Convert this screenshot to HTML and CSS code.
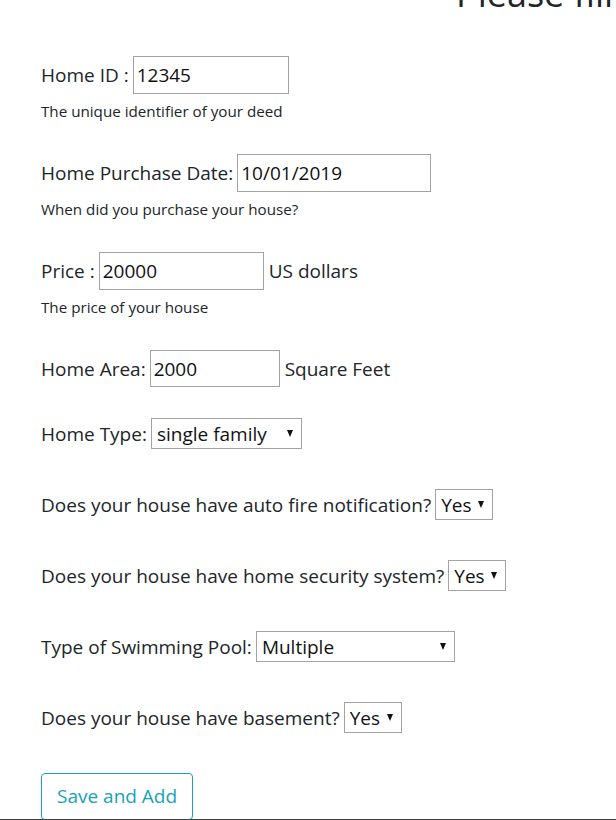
FILE: index.html
```html
<!DOCTYPE html>
<html lang="en">
<head>
<meta charset="utf-8">
<title>Home form</title>
<link rel="stylesheet" href="styles.css">
</head>
<body>
<div class="page">
  <h1 class="title">Please fill out the form</h1>
  <form class="form">
    <div class="group">
      <div class="row">
        <label class="label" for="hid">Home ID :</label>
        <input class="input w-id" id="hid" type="text" value="12345">
      </div>
      <div class="help">The unique identifier of your deed</div>
    </div>
    <div class="group">
      <div class="row">
        <label class="label" for="hdate">Home Purchase Date:</label>
        <input class="input w-date" id="hdate" type="text" value="10/01/2019">
      </div>
      <div class="help">When did you purchase your house?</div>
    </div>
    <div class="group">
      <div class="row">
        <label class="label" for="price">Price :</label>
        <input class="input w-price" id="price" type="text" value="20000">
        <span class="suffix">US dollars</span>
      </div>
      <div class="help">The price of your house</div>
    </div>
    <div class="group last">
      <div class="row">
        <label class="label" for="area">Home Area:</label>
        <input class="input w-area" id="area" type="text" value="2000">
        <span class="suffix">Square Feet</span>
      </div>
    </div>
    <div class="sgroup first">
      <label class="label" for="htype">Home Type:</label>
      <span class="sel w-type"><select id="htype"><option>single family</option></select></span>
    </div>
    <div class="sgroup">
      <label class="label" for="fire">Does your house have auto fire notification?</label>
      <span class="sel w-yes"><select id="fire"><option>Yes</option></select></span>
    </div>
    <div class="sgroup">
      <label class="label" for="sec">Does your house have home security system?</label>
      <span class="sel w-yes"><select id="sec"><option>Yes</option></select></span>
    </div>
    <div class="sgroup">
      <label class="label" for="pool">Type of Swimming Pool:</label>
      <span class="sel w-pool"><select id="pool"><option>Multiple</option></select></span>
    </div>
    <div class="sgroup">
      <label class="label" for="base">Does your house have basement?</label>
      <span class="sel w-yes"><select id="base"><option>Yes</option></select></span>
    </div>
    <div class="actions">
      <button type="button" class="btn">Save and Add</button>
    </div>
  </form>
</div>
<div class="edge"></div>
</body>
</html>
```
FILE: styles.css
```css
html, body {
  margin: 0;
  padding: 0;
  background: #fff;
}
body {
  font-family: "Open Sans", "Noto Sans", sans-serif;
  color: #212529;
  overflow: hidden;
  height: 820px;
}
.page {
  padding-left: 41px;
  overflow: hidden;
}
.title {
  margin: -28px 0 0 415px;
  font-size: 36px;
  line-height: 43px;
  font-weight: 500;
  white-space: nowrap;
  color: #212529;
}
.form {
  display: flex;
  flex-direction: column;
  align-items: flex-start;
  margin-top: 41px;
}
.group {
  margin-bottom: 33px;
}
.group.last {
  margin-bottom: 0;
}
.row {
  display: flex;
  align-items: center;
  gap: 4px;
  height: 38px;
}
.group.last .row {
  height: 37px;
}
.label {
  font-size: 19px;
  line-height: 26px;
  white-space: nowrap;
}
.suffix {
  font-size: 19px;
  line-height: 26px;
  margin-left: 1px;
}
.input {
  box-sizing: border-box;
  height: 38px;
  border: 1px solid #a3a3a3;
  border-radius: 0;
  padding: 0 3px;
  font-family: "Open Sans", "Noto Sans", sans-serif;
  font-size: 19px;
  color: #111;
  background: #fff;
  outline: none;
}
.group.last .input {
  height: 37px;
}
.w-id { width: 156px; }
.w-date { width: 194px; }
.w-price { width: 165px; }
.w-area { width: 130px; }
.help {
  margin-top: 7px;
  font-size: 15.2px;
  line-height: 20px;
  color: #212529;
}
.sgroup {
  display: flex;
  align-items: center;
  gap: 4px;
  height: 31px;
  margin-top: 40px;
}
.sgroup.first {
  margin-top: 31px;
}
.sel {
  position: relative;
  display: inline-block;
  height: 31px;
}
.sel select {
  box-sizing: border-box;
  width: 100%;
  height: 31px;
  border: 1px solid #a3a3a3;
  border-radius: 0;
  padding: 0 20px 0 5px;
  font-family: "Open Sans", "Noto Sans", sans-serif;
  font-size: 19px;
  color: #111;
  background: #fff;
  -webkit-appearance: none;
  appearance: none;
  outline: none;
}
.sel::after {
  content: "";
  position: absolute;
  right: 9px;
  top: 12px;
  border-left: 3.5px solid transparent;
  border-right: 3.5px solid transparent;
  border-top: 7px solid #111;
  pointer-events: none;
}
.w-type { width: 151px; }
.w-yes { width: 58px; }
.w-pool { width: 199px; }
.actions {
  margin-top: 40px;
}
.btn {
  box-sizing: border-box;
  height: 47px;
  padding: 0 15px;
  border: 1px solid #17a2b8;
  border-radius: 4px;
  background: #fff;
  color: #17a2b8;
  font-family: "Open Sans", "Noto Sans", sans-serif;
  font-size: 19px;
  line-height: 27px;
  cursor: pointer;
}
.edge {
  position: fixed;
  left: 0;
  right: 0;
  bottom: 0;
  height: 1px;
  background: #444;
}
```
